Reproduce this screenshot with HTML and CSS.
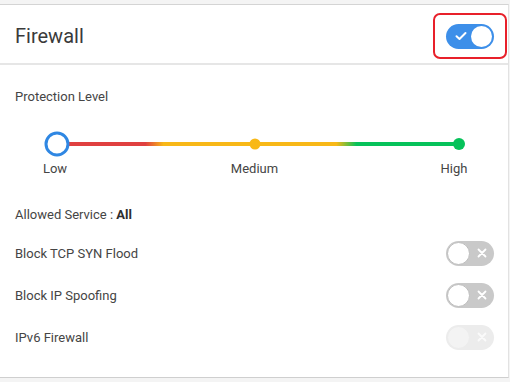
FILE: index.html
```html
<!DOCTYPE html>
<html lang="en">
<head>
  <meta charset="UTF-8">
  <meta name="viewport" content="width=device-width, initial-scale=1.0">
  <title>Firewall</title>
  <link rel="stylesheet" href="styles.css">
</head>
<body>
<div class="card">
  <div class="card-header">
    <h1>Firewall</h1>
    <div class="highlight">
      <span class="toggle on">
        <svg class="icon" width="12" height="10" viewBox="0 0 12 10"><path d="M1.5 5.2 L4.5 8 L10.5 2" fill="none" stroke="#fff" stroke-width="2" stroke-linecap="round" stroke-linejoin="round"/></svg>
        <span class="knob"></span>
      </span>
    </div>
  </div>

  <div class="card-body">
    <div class="section-title">Protection Level</div>

    <div class="slider">
      <span class="dot low"></span>
      <span class="dot medium"></span>
      <span class="dot high"></span>
    </div>
    <div class="slider-labels">
      <span>Low</span>
      <span>Medium</span>
      <span>High</span>
    </div>

    <div class="allowed">Allowed Service : <b>All</b></div>

    <div class="options">
      <div class="option">
        <span>Block TCP SYN Flood</span>
        <span class="toggle off">
          <span class="knob"></span>
          <svg class="icon" width="10" height="10" viewBox="0 0 10 10"><path d="M1.5 1.5 L8.5 8.5 M8.5 1.5 L1.5 8.5" stroke="#fff" stroke-width="1.8" stroke-linecap="round"/></svg>
        </span>
      </div>
      <div class="option">
        <span>Block IP Spoofing</span>
        <span class="toggle off">
          <span class="knob"></span>
          <svg class="icon" width="10" height="10" viewBox="0 0 10 10"><path d="M1.5 1.5 L8.5 8.5 M8.5 1.5 L1.5 8.5" stroke="#fff" stroke-width="1.8" stroke-linecap="round"/></svg>
        </span>
      </div>
      <div class="option">
        <span>IPv6 Firewall</span>
        <span class="toggle off disabled">
          <span class="knob"></span>
          <svg class="icon" width="10" height="10" viewBox="0 0 10 10"><path d="M1.5 1.5 L8.5 8.5 M8.5 1.5 L1.5 8.5" stroke="#fafafa" stroke-width="1.8" stroke-linecap="round"/></svg>
        </span>
      </div>
    </div>
  </div>
</div>
</body>
</html>
```

FILE: styles.css
```css
body { margin: 0; padding-top: 4px; background: #f4f4f4; font-family: Roboto, "Liberation Sans", Arial, sans-serif; color: #454545; }
.card { width: 509px; height: 374px; box-sizing: border-box; background: #fff; border-top: 1px solid #d4d4d4; border-bottom: 1px solid #cfcfcf; border-right: 1px solid #e2e2e2; }

.card-header { height: 60px; box-sizing: border-box; padding: 4px 14px 0 15px; display: flex; align-items: center; justify-content: space-between; border-bottom: 2px solid #e6e6e6; }
.card-header h1 { margin: 0; font-size: 20px; font-weight: 400; color: #3a3a3a; }
.highlight { position: relative; display: flex; }
.highlight::after { content: ""; position: absolute; left: -13px; right: -13px; top: -11px; bottom: -10px; border: 2px solid #e8202a; border-radius: 7px; }

.toggle { width: 48px; height: 25px; box-sizing: border-box; border-radius: 13px; display: flex; align-items: center; padding: 0 2px; }
.toggle .knob { width: 21px; height: 21px; border-radius: 50%; background: #fff; box-sizing: border-box; }
.toggle.on { background: #3d8fe9; justify-content: space-between; padding-left: 9px; }
.toggle.off { background: #c9c9c9; gap: 7px; padding-left: 1px; }
.toggle.off .knob { width: 23px; height: 23px; border: 1px solid #bdbdbd; }
.toggle.disabled { background: #ececec; }
.toggle.disabled .knob { background: #f3f3f3; border-color: #ececec; }
.icon { display: block; }

.card-body { padding: 0 14px 0 15px; font-size: 13px; }
.section-title { margin-top: 23px; line-height: 18px; }

.slider { position: relative; height: 4px; margin: 36px 35px 0 42px; border-radius: 2px; background: linear-gradient(to right, #e04040 0%, #e04040 22%, #f8b817 26.5%, #f8b817 69.5%, #06c25a 74.5%, #06c25a 100%); }
.dot { position: absolute; top: 50%; border-radius: 50%; transform: translate(-50%, -50%); }
.dot.low { left: 0; width: 25px; height: 25px; box-sizing: border-box; border: 3px solid #2f87e3; background: #fff; }
.dot.medium { left: 49.25%; width: 11px; height: 11px; background: #f8b817; }
.dot.high { left: 100%; width: 12px; height: 12px; background: #06c25a; }

.slider-labels { display: flex; justify-content: space-between; margin: 15px 10px 0 10px; line-height: 16px; }
.slider-labels span { width: 60px; text-align: center; }

.allowed { margin-top: 29px; line-height: 18px; }
.allowed b { color: #2e2e2e; }

.options { margin-top: 8px; }
.option { height: 42px; display: flex; align-items: center; justify-content: space-between; }
```
